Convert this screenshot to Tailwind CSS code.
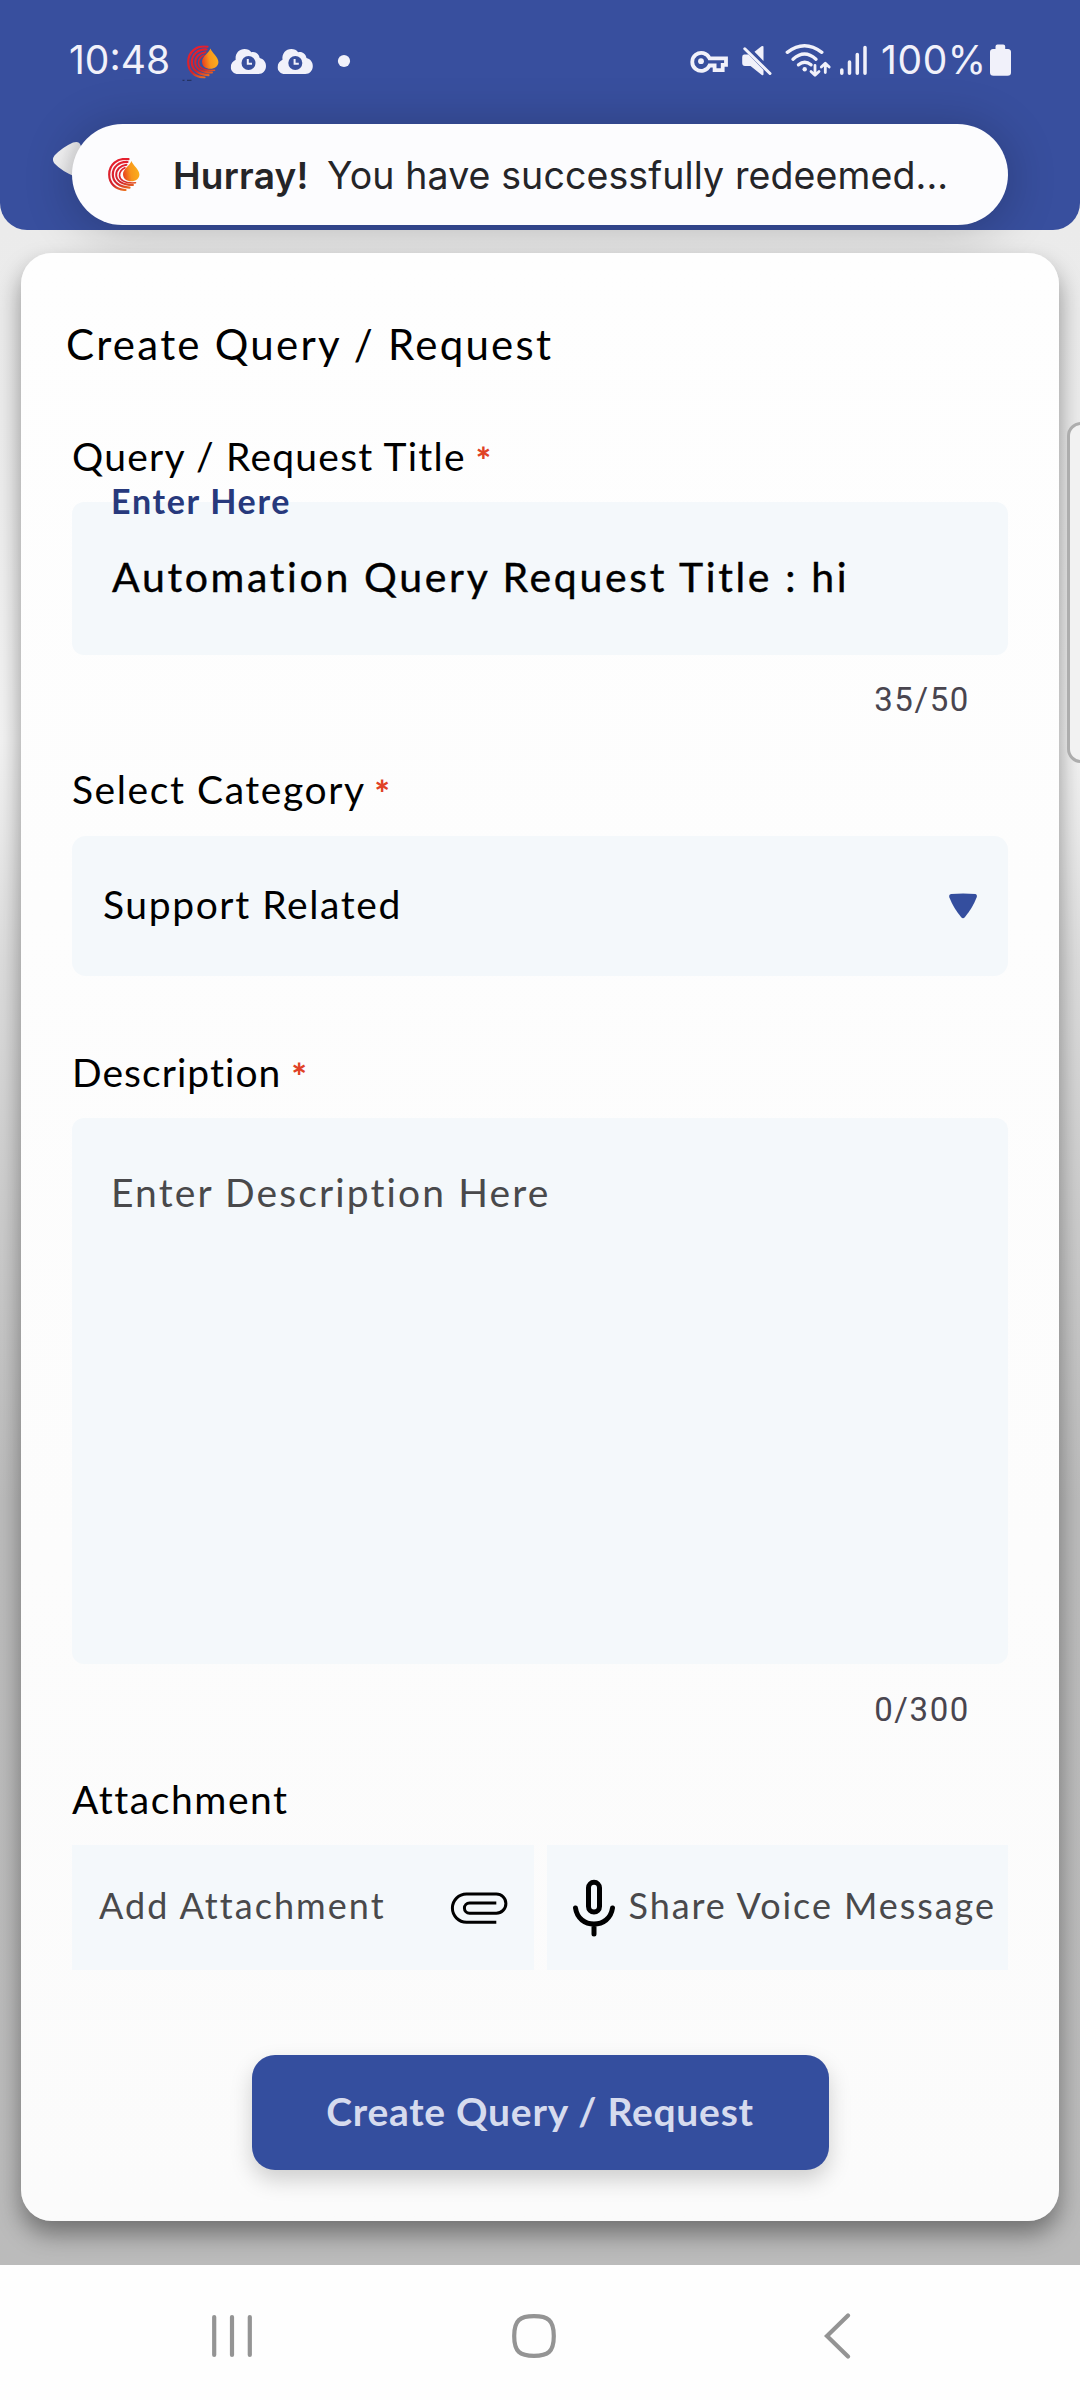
<!DOCTYPE html>
<html lang="en">
<head>
<meta charset="utf-8">
<title>Create Query / Request</title>
<script src="https://cdn.jsdelivr.net/npm/@tailwindcss/browser@4"></script>
</head>
<body class="bg-white">
<svg width="0" height="0" class="absolute">
  <defs>
    <linearGradient id="ring" gradientUnits="userSpaceOnUse" x1="8" y1="0" x2="20" y2="33"><stop offset="0" stop-color="#e81f2f"/><stop offset="0.7" stop-color="#d3242b"/><stop offset="1" stop-color="#ee7d1e"/></linearGradient>
    <linearGradient id="drop" x1="0" y1="0.6" x2="1" y2="0.4"><stop offset="0" stop-color="#e8401f"/><stop offset="0.45" stop-color="#f8961d"/><stop offset="1" stop-color="#fbb01c"/></linearGradient>
    <linearGradient id="tip" x1="0" y1="0" x2="1" y2="0.3"><stop offset="0.3" stop-color="#f4f4f5"/><stop offset="1" stop-color="#cfcfd2"/></linearGradient>
    <symbol id="logo" viewBox="0 0 32 33">
      <g fill="none" stroke="url(#ring)" stroke-linecap="round">
        <path stroke-width="2.200" d="M20.500 1.200C9 -0.500 1.200 7 1.200 16.500S8 31.500 17.500 32"/>
        <path stroke-width="2.200" d="M19.500 4C11 3.500 4.800 9 4.800 16.500S11 29.200 21.500 29.600"/>
        <path stroke-width="2" d="M18.500 6.700C12.500 7.500 8.200 11.500 8.200 17S14 27 25 27"/>
        <path stroke-width="1.600" d="M17 9.800C13.500 11.500 11.500 14 11.500 17.500S15.500 25.800 27.500 24.800"/>
      </g>
      <path fill="url(#drop)" d="M23.500 3C25 7.500 31.400 11.500 31.400 16.500C31.400 20.500 27.800 23.300 23.300 23.300S15 20.500 15 16.200C15 11 21.500 8 23.500 3Z"/>
    </symbol>
    <symbol id="cloud" viewBox="0 0 36 26">
      <path fill="#f1f1fa" d="M7.500 25.500C3.500 25.500 0.300 22.600 0.300 18.700C0.300 15 2.600 12.500 5.200 11.300C4.300 5.300 8.500 0.600 14 0.600C17 0.600 19.300 1.800 20.800 3.700C25 2.800 28.500 5.300 29.200 9.600C32.800 10.500 35.500 13.500 35.500 17.500C35.500 22 32.300 25.500 28 25.500Z"/>
      <circle cx="18" cy="14.500" r="7" fill="#384f9d"/>
      <path fill="none" stroke="#f1f1fa" stroke-width="2" d="M17.300 10.500V15.300H21.500"/>
    </symbol>
  </defs>
</svg>

<div class="relative flex h-[2400px] w-[1080px] flex-col overflow-hidden bg-[linear-gradient(to_bottom,#ebebeb_230px,#eeeeee_500px,#f4f4f4_740px,#ececec_830px,#dedede_960px,#cccccc_1240px,#bcbcbc_1500px,#bbbbbb_2265px)] font-['Lato',sans-serif] text-black">

  <!-- app bar with status icons -->
  <header class="relative h-[230px] shrink-0 rounded-b-[27px] bg-[#384f9e]">
    <div class="flex items-start pt-10 pr-[66px] pl-[69px]">
      <span class="-mt-px w-[113px] font-['Inter',sans-serif] text-[39px] leading-[42px] text-[#f1f1fa]">10:48</span>
      <svg class="h-[42px] w-[42px]" viewBox="182 40 42 42"><use href="#logo" x="187" y="45.500" width="32" height="33"/><path d="M182.500 80.300h2M187 80.300h4.500" stroke="#1b2340" stroke-width="0.800"/></svg>
      <svg class="h-[42px] w-[46px]" viewBox="224 40 46 42"><use href="#cloud" x="230.500" y="48.500" width="36" height="26"/></svg>
      <svg class="h-[42px] w-[46px]" viewBox="271 40 46 42"><use href="#cloud" x="278.300" y="48.500" width="36" height="26"/></svg>
      <svg class="h-[42px] w-[42px]" viewBox="316 40 42 42"><circle cx="344" cy="61" r="6.100" fill="#f1f1fa"/></svg>

      <svg class="ml-auto h-[42px] w-[194px]" viewBox="686 40 194 42" fill="none" stroke="#f1f1fa">
        <g stroke-width="3.800">
          <path d="M709.500 58.300H726V64.800H722.700V70.200H714.600V65.500H709.500A9 9 0 1 1 709.500 58.300Z" stroke-linejoin="miter"/>
          <circle cx="701" cy="61.200" r="2.900" fill="#f1f1fa" stroke="none"/>
        </g>
        <g stroke="none" fill="#f1f1fa">
          <path d="M763.500 46.500V61L754.500 51.800L761.500 46.300Q763 45.400 763.500 46.500Z"/>
          <path d="M744 54.500H748.500L763.500 70V74.300Q763.300 75.800 761.800 75L750.500 66H745Q742.200 66 742.200 63V57Q742.200 54.800 744 54.500Z"/>
        </g>
        <path d="M744.800 48.800L770 73.500" stroke-width="3" stroke-linecap="round"/>
        <g stroke-width="3.400" stroke-linecap="round">
          <path d="M787.300 52.300Q804.500 39 821.800 52.300"/>
          <path d="M793 59.200Q804.500 49 816 59.200"/>
          <path d="M798.500 64.800Q804.700 59.500 811 64.800"/>
        </g>
        <circle cx="804.700" cy="69.300" r="2.200" fill="#f1f1fa" stroke="none"/>
        <g stroke-width="2.800" stroke-linecap="round" stroke-linejoin="round">
          <path d="M815 65.500V75M811 71.500L815 75.300L819 71.500"/>
          <path d="M825.300 72.500V63.500M821.300 67L825.300 63.200L829.200 67"/>
        </g>
        <g stroke-width="3.500" stroke-linecap="round">
          <path d="M841.800 70V73.200M849.500 62V73.200M857.300 54.500V73.200M865 47.500V73.200"/>
        </g>
      </svg>
      <span class="-mt-px w-[107px] pl-px font-['Inter',sans-serif] text-[39px] leading-[42px] tracking-[0.600px] text-[#f1f1fa]">100%</span>
      <svg class="h-[42px] w-[27px]" viewBox="987 40 27 42"><path fill="#f1f1fa" d="M995.500 49V46.500Q995.500 44.500 997.500 44.500H1003.200Q1005.200 44.500 1005.200 46.500V49H1008Q1011 49.300 1011 52V72.500Q1011 75.700 1007.500 75.700H993.500Q990 75.700 990 72.500V52Q990 49.300 993 49Z"/></svg>
    </div>

    <!-- back arrow, mostly hidden by the notification -->
    <svg class="absolute top-[140px] left-[50px] h-[50px] w-[50px]" viewBox="50 140 50 50"><path fill="url(#tip)" d="M54.500 155.500Q62 147.500 73 142.500Q79 140.500 80.500 145L95 180L76 177Q62 171.500 54.500 163.500Q51.500 159.500 54.500 155.500Z"/></svg>

    <!-- heads-up notification -->
    <div class="absolute top-[124px] left-[72px] flex h-[101px] w-[936px] items-center rounded-full bg-[#fcfcfe] pl-9 font-['Inter',sans-serif] text-[37.500px] leading-[48px] text-[#252528] shadow-[0_4px_50px_rgba(0,0,0,0.240)]">
      <svg class="h-[33px] w-8"><use href="#logo" width="32" height="33"/></svg>
      <span class="ml-[33px] w-[154px] pt-[2px] whitespace-nowrap text-[37px] font-semibold tracking-[0.250px]">Hurray!</span>
      <span class="pt-[2px] tracking-[0.110px] whitespace-nowrap">You have successfully redeemed...</span>
    </div>
  </header>

  <!-- form card -->
  <main class="relative mx-[21px] mt-[23px] flex h-[1968px] flex-col rounded-[31px] bg-linear-to-b from-[#fefefe] to-[#fbfbfb] px-[51px] pt-[65px] text-[39px] leading-[48px] shadow-[0_13px_24px_rgba(0,0,0,0.400)]">
    <h1 class="-ml-[6px] text-[42px] leading-[52px] tracking-[2.250px]">Create Query / Request</h1>

    <label class="mt-[62px] flex tracking-[1.230px]">Query / Request Title<span class="ml-[10px] translate-y-1 text-[36px] font-black text-[#e04226]">*</span></label>
    <div class="relative mt-[22px] h-[153px] shrink-0 rounded-[12px] bg-[#f4f8fb] pt-[51px] pl-10">
      <span class="absolute -top-[21px] left-[39px] text-[34px] leading-10 font-bold tracking-[1.700px] text-[#27397c]">Enter Here</span>
      <span class="text-[41px] tracking-[2.650px] whitespace-nowrap [-webkit-text-stroke:0.400px_black]">Automation Query Request Title : hi</span>
    </div>
    <div class="mt-[25px] pr-[38px] text-right font-['Roboto',sans-serif] text-[33px] leading-10 tracking-[1.590px] text-[#49454f]">35/50</div>

    <label class="mt-[45px] flex tracking-[1.570px]">Select Category<span class="ml-[9px] translate-y-1 text-[36px] font-black text-[#e04226]">*</span></label>
    <div class="mt-[23px] flex h-[140px] shrink-0 items-center justify-between rounded-[14px] bg-[#f4f8fb] pr-[31px] pl-[31px]">
      <span class="pb-1 tracking-[1.600px]">Support Related</span>
      <svg class="h-[26px] w-7" viewBox="0 0 28 26"><path fill="#344e9e" d="M2 1Q14 0.200 26.500 1Q28.600 1.800 27.600 4.500Q23.500 15 16 24Q14 26.400 12 24Q4.500 15 0.400 4.500Q-0.500 1.500 2 1Z"/></svg>
    </div>

    <label class="mt-[72px] flex tracking-[1.050px]">Description<span class="ml-[10px] translate-y-1 text-[36px] font-black text-[#e04226]">*</span></label>
    <div class="mt-[22px] h-[546px] shrink-0 rounded-[12px] bg-[#f4f8fb] pt-[50px] pl-[39px] tracking-[2.120px] text-[#49494b]">Enter Description Here</div>
    <div class="mt-[26px] pr-[38px] text-right font-['Roboto',sans-serif] text-[33px] leading-10 tracking-[1.590px] text-[#49454f]">0/300</div>

    <div class="mt-[45px] tracking-[1.550px]">Attachment</div>
    <div class="mt-[22px] grid h-[125px] shrink-0 grid-cols-2 gap-[13px] text-[36px] leading-[44px] text-[#49494b]">
      <div class="flex items-center justify-between bg-[#f4f8fb] pr-[26px] pl-[27px]">
        <span class="pb-[5px] tracking-[2.050px]">Add Attachment</span>
        <svg class="h-[34px] w-[58px]" viewBox="450 1890.500 58 34" fill="none" stroke="#000" stroke-width="3"><path d="M496.300 1902.500H469.500A5.100 5.100 0 0 0 469.500 1912.700H496.300A9.600 9.600 0 0 0 496.300 1893.500H466.500A14.100 14.100 0 0 0 466.500 1921.700H496.300"/></svg>
      </div>
      <div class="flex items-center bg-[#f4f8fb] pl-[25px]">
        <svg class="h-[60px] w-11 shrink-0" viewBox="572 1877.500 44 60" fill="none" stroke="#000" stroke-width="5" stroke-linecap="round"><rect x="588.500" y="1881.800" width="11" height="29.700" rx="5.500"/><path d="M575.500 1907.500C577 1918 585 1923.500 594 1923.500S611 1918 612.500 1907.500M594 1924V1933.500"/></svg>
        <span class="ml-[13px] pb-[5px] tracking-[1.930px] whitespace-nowrap">Share Voice Message</span>
      </div>
    </div>

    <button class="mt-[85px] h-[115px] w-[577px] shrink-0 self-center rounded-[23px] bg-[#344e9e] pb-1 font-bold tracking-[0.740px] text-[#d6dbee] shadow-[0_10px_22px_rgba(0,0,0,0.180)]">Create Query / Request</button>
  </main>

  <!-- edge panel handle -->
  <div class="absolute top-[422px] left-[1067px] h-[341px] w-10 rounded-[14px] border-[3px] border-[#adadad] bg-[#f2f2f2]"></div>

  <!-- system navigation -->
  <nav class="relative mt-auto flex h-[135px] items-start bg-[#fefefe] pt-[48px] pl-[210px]">
    <svg class="h-[46px] w-11" viewBox="210 2313 44 46" stroke="#949494" stroke-width="4.200" stroke-linecap="round"><path d="M214.200 2317V2355M232 2317V2355M249.800 2317V2355"/></svg>
    <svg class="ml-[256px] h-[46px] w-12" viewBox="510 2313 48 46" fill="none" stroke="#949494" stroke-width="4.200"><path d="M534 2316.200C548 2316.200 553.800 2320 553.800 2336S548 2355.800 534 2355.800S514.200 2352 514.200 2336S520 2316.200 534 2316.200Z"/></svg>
    <svg class="ml-[264px] h-[46px] w-8" viewBox="822 2313 32 46" fill="none" stroke="#949494" stroke-width="4.200" stroke-linecap="round"><path d="M848 2315.500L827 2336L848 2356.500"/></svg>
  </nav>
</div>
</body>
</html>
